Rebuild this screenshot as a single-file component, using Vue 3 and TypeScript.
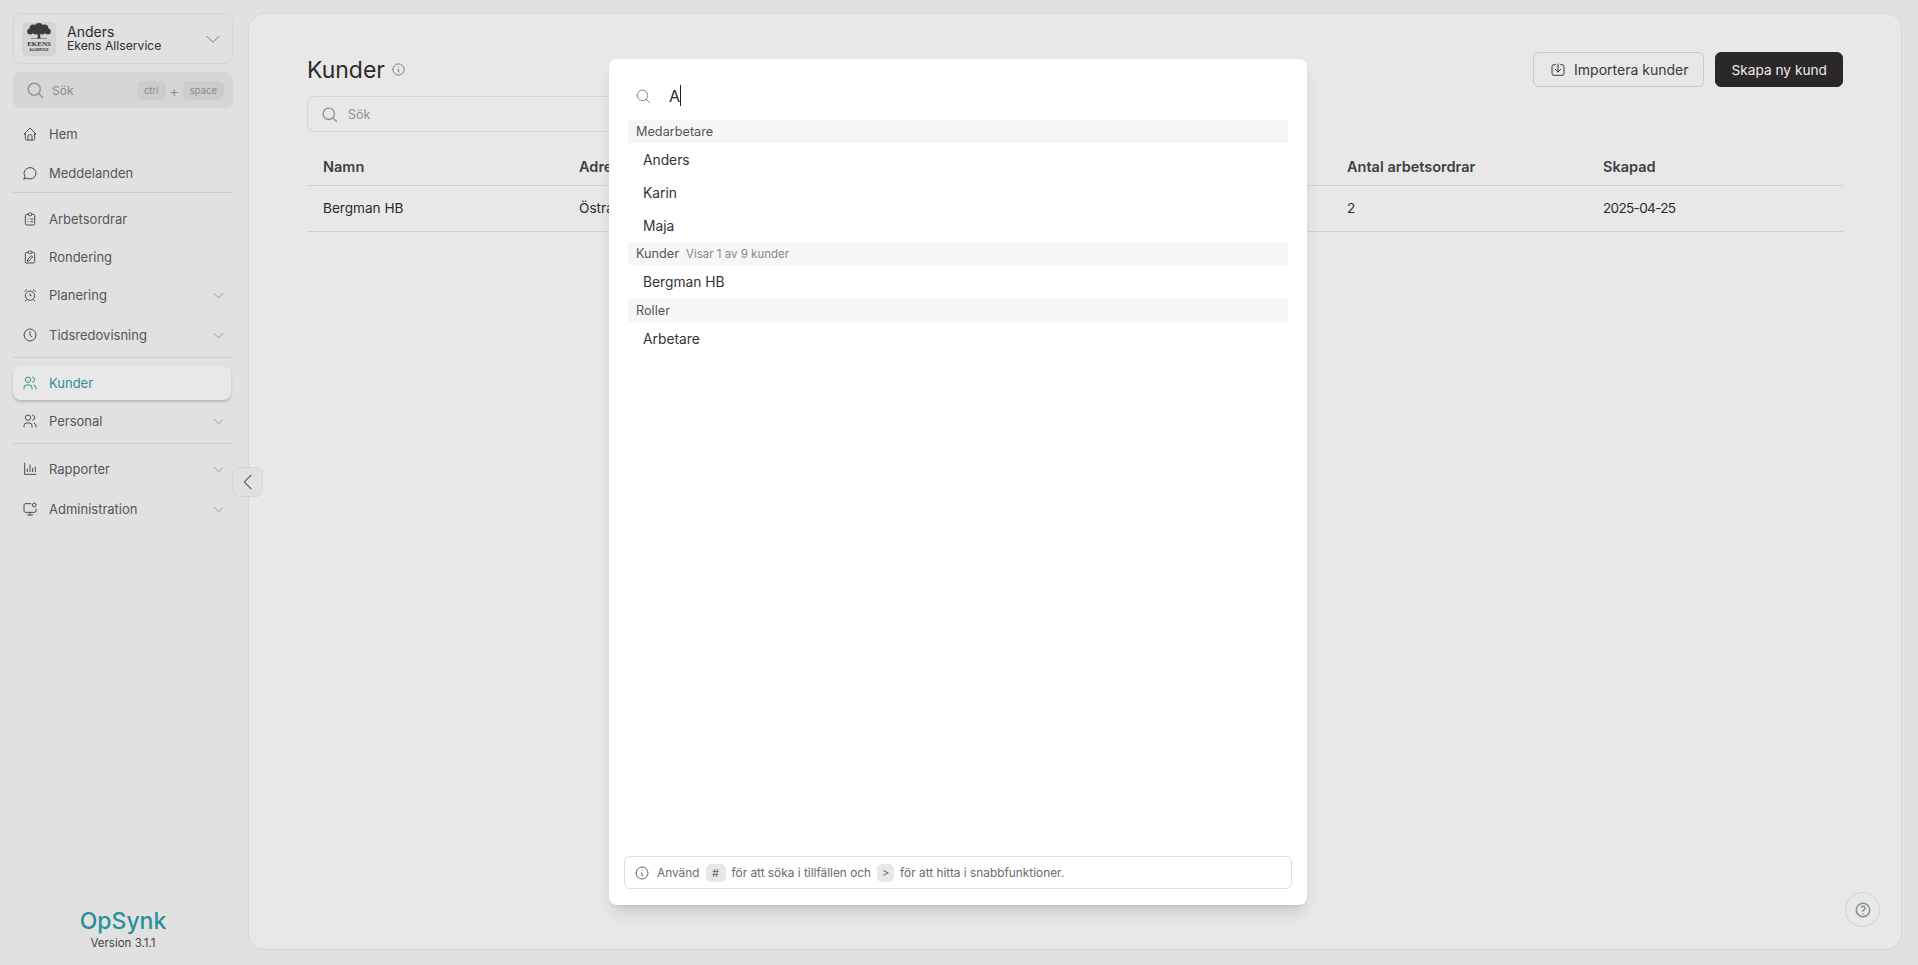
<script setup lang="ts">
interface NavItem { label: string; icon: string[]; chevron?: boolean; active?: boolean }
const I = {
  home: ['M5 12H3l9-9 9 9h-2', 'M5 12v7a2 2 0 0 0 2 2h10a2 2 0 0 0 2-2v-7', 'M9 21v-6a2 2 0 0 1 2-2h2a2 2 0 0 1 2 2v6'],
  msg: ['M3 21l1.4-4.200A9 8.500 0 1 1 7.700 19.800L3 21'],
  list: ['M9 5H7a2 2 0 0 0-2 2v12a2 2 0 0 0 2 2h10a2 2 0 0 0 2-2V7a2 2 0 0 0-2-2h-2', 'M9 5a2 2 0 0 1 2-2h2a2 2 0 0 1 2 2a2 2 0 0 1-2 2h-2a2 2 0 0 1-2-2', 'M9 12h.01M13 12h3M9 16h.01M13 16h3'],
  pen: ['M9 5H7a2 2 0 0 0-2 2v12a2 2 0 0 0 2 2h10a2 2 0 0 0 2-2V7a2 2 0 0 0-2-2h-2', 'M9 5a2 2 0 0 1 2-2h2a2 2 0 0 1 2 2a2 2 0 0 1-2 2h-2a2 2 0 0 1-2-2', 'M8 18l1-3 5-5 2 2-5 5z'],
  alarm: ['M5 13a7 7 0 1 0 14 0a7 7 0 1 0-14 0', 'M12 10v3h2', 'M7 4L4 6.500', 'M17 4l3 2.500', 'M7 19l-2 2M17 19l2 2'],
  clock: ['M3 12a9 9 0 1 0 18 0a9 9 0 1 0-18 0', 'M12 7v5l3 3'],
  users: ['M5 7a4 4 0 1 0 8 0a4 4 0 1 0-8 0', 'M3 21v-2a4 4 0 0 1 4-4h4a4 4 0 0 1 4 4v2', 'M16 3.130a4 4 0 0 1 0 7.750', 'M21 21v-2a4 4 0 0 0-3-3.850'],
  chart: ['M4 3v17h17', 'M8 16v-4M12 16V6M16 16v-5M20 16V9'],
  admin: ['M13 4H5a2 2 0 0 0-2 2v9a2 2 0 0 0 2 2h14a2 2 0 0 0 2-2v-3', 'M8 21h8M12 17v4', 'M15.500 6a2.800 2.800 0 1 0 5.600 0a2.800 2.800 0 1 0-5.600 0'],
}
const groups: NavItem[][] = [
  [{ label: 'Hem', icon: I.home }, { label: 'Meddelanden', icon: I.msg }],
  [{ label: 'Arbetsordrar', icon: I.list }, { label: 'Rondering', icon: I.pen }, { label: 'Planering', icon: I.alarm, chevron: true }, { label: 'Tidsredovisning', icon: I.clock, chevron: true }],
  [{ label: 'Kunder', icon: I.users, active: true }, { label: 'Personal', icon: I.users, chevron: true }],
  [{ label: 'Rapporter', icon: I.chart, chevron: true }, { label: 'Administration', icon: I.admin, chevron: true }],
]
const sections = [
  { title: 'Medarbetare', note: '', items: ['Anders', 'Karin', 'Maja'] },
  { title: 'Kunder', note: 'Visar 1 av 9 kunder', items: ['Bergman HB'] },
  { title: 'Roller', note: '', items: ['Arbetare'] },
]
const columns = ['Namn', 'Adress', '', '', 'Antal arbetsordrar', 'Skapad']
const row = ['Bergman HB', 'Östra', '', '', '2', '2025-04-25']
const crown = [[13, 4, 4], [7.5, 5.5, 4], [18.5, 5.5, 4], [4.2, 8.5, 3], [21.8, 8.5, 3], [10, 8, 3.5], [16, 8, 3.5]]
</script>

<template>
  <div class="page">
    <aside class="sidebar">
      <div class="user">
        <div class="avatar">
          <svg class="tree" width="26" height="16" viewBox="0 0 26 16">
            <circle v-for="(c, i) in crown" :key="i" :cx="c[0]" :cy="c[1]" :r="c[2]" />
            <path d="M11.500 15.500h3l-.6-5 2-2-1 .2-1.200 1-.5-1.700-1 0-.4 1.700-1.300-1-1-.2 2.200 2z" />
            <path d="M5 15.500h16v.5H5z" />
          </svg>
          <span class="ekens">EKENS</span>
          <span class="allservice">ALLSERVICE</span>
        </div>
        <div class="user-text">
          <div class="user-name">Anders</div>
          <div class="user-company">Ekens Allservice</div>
        </div>
        <svg class="user-chev" width="16" height="16" viewBox="0 0 24 24"><path d="M3 8l9 9 9-9" /></svg>
      </div>
      <div class="side-search">
        <svg class="mag" width="18" height="18" viewBox="0 0 24 24"><path d="M3 11a8 8 0 1 0 16 0a8 8 0 1 0-16 0M17 17l5 5" /></svg>
        <span class="side-search-label">Sök</span>
        <span class="kbd">ctrl</span><span class="plus">+</span><span class="kbd">space</span>
      </div>
      <nav class="nav">
        <template v-for="(group, g) in groups" :key="g">
          <div v-if="g" class="divider" />
          <div class="group" :class="`group-${g}`">
            <div v-for="item in group" :key="item.label" class="nav-item" :class="{ active: item.active }">
              <svg class="nav-icon" width="16" height="16" viewBox="0 0 24 24"><path v-for="d in item.icon" :key="d" :d="d" /></svg>
              <span class="nav-label">{{ item.label }}</span>
              <svg v-if="item.chevron" class="nav-chev" width="11" height="11" viewBox="0 0 24 24"><path d="M3 8l9 9 9-9" /></svg>
            </div>
          </div>
        </template>
      </nav>
      <div class="brand">
        <div class="brand-name">OpSynk</div>
        <div class="brand-version">Version 3.1.1</div>
      </div>
    </aside>

    <main class="main">
      <header class="head">
        <div class="head-left">
          <div class="title-row">
            <h1>Kunder</h1>
            <svg class="info" width="15" height="15" viewBox="0 0 24 24"><path d="M3 12a9 9 0 1 0 18 0a9 9 0 1 0-18 0M12 8h.01M11 12h1v4h1" /></svg>
          </div>
          <div class="search">
            <svg class="mag" width="17" height="17" viewBox="0 0 24 24"><path d="M3 11a8 8 0 1 0 16 0a8 8 0 1 0-16 0M17 17l5 5" /></svg>
            <span>Sök</span>
          </div>
        </div>
        <div class="actions">
          <button class="btn">
            <svg width="16" height="16" viewBox="0 0 24 24"><path d="M8 4H6a3 3 0 0 0-3 3v10a3 3 0 0 0 3 3h12a3 3 0 0 0 3-3V7a3 3 0 0 0-3-3h-2M12 3v12M8 11l4 4 4-4" /></svg>
            Importera kunder
          </button>
          <button class="btn primary">Skapa ny kund</button>
        </div>
      </header>
      <div class="table">
        <div class="tr th"><div v-for="(c, i) in columns" :key="i">{{ c }}</div></div>
        <div class="tr td"><div v-for="(c, i) in row" :key="i">{{ c }}</div></div>
      </div>
    </main>

    <button class="collapse" aria-label="Fäll ihop">
      <svg width="18" height="18" viewBox="0 0 24 24"><path d="M16 3l-9 9 9 9" /></svg>
    </button>
    <button class="help" aria-label="Hjälp">
      <svg width="18" height="18" viewBox="0 0 24 24"><path d="M3 12a9 9 0 1 0 18 0a9 9 0 1 0-18 0M12 17h.01M12 13.500a1.500 1.500 0 0 1 1-1.500 2.600 2.600 0 1 0-3-4" /></svg>
    </button>

    <section class="modal">
      <div class="modal-search">
        <svg width="16" height="16" viewBox="0 0 24 24"><path d="M3 11a8 8 0 1 0 16 0a8 8 0 1 0-16 0M17 17l5 5" /></svg>
        <span class="typed">A</span><span class="caret" />
      </div>
      <div class="results">
        <template v-for="s in sections" :key="s.title">
          <div class="sec-head"><span>{{ s.title }}</span><small v-if="s.note">{{ s.note }}</small></div>
          <div v-for="it in s.items" :key="it" class="result">{{ it }}</div>
        </template>
      </div>
      <div class="hint">
        <svg width="16" height="16" viewBox="0 0 24 24"><path d="M3 12a9 9 0 1 0 18 0a9 9 0 1 0-18 0M12 8h.01M11 12h1v4h1" /></svg>
        <span>Använd</span><kbd>#</kbd><span>för att söka i tillfällen och</span><kbd class="narrow">&gt;</kbd><span>för att hitta i snabbfunktioner.</span>
      </div>
    </section>
  </div>
</template>

<style>
html, body { margin: 0; background: #e1e1e1; }
</style>

<style scoped>
* { box-sizing: border-box; }
svg { fill: none; stroke: currentColor; stroke-width: 1.5; stroke-linecap: round; stroke-linejoin: round; flex: none; }
.page { position: relative; display: flex; height: 965px; overflow: hidden; background: #e1e1e1; padding: 13px 16px 15px 0; font-family: "Inter", "Liberation Sans", sans-serif; color: #2b2b2b; }

.sidebar { width: 248px; flex: none; padding: 0 15px 0 13px; display: flex; flex-direction: column; }
.user { height: 51px; border: 1px solid #d6d6d6; border-radius: 8px; display: flex; align-items: center; padding: 0 11px 0 8px; }
.avatar { width: 34px; height: 34px; border-radius: 5px; background: #d4d4d4; display: flex; flex-direction: column; align-items: center; color: #333; padding-top: 1px; overflow: hidden; flex: none; }
.avatar svg.tree { fill: #3c3c3c; stroke: none; }
.ekens { font-family: "Liberation Serif", serif; font-size: 7px; font-weight: 700; line-height: 8px; margin-top: 1px; }
.allservice { font-family: "Liberation Sans", sans-serif; font-size: 3px; line-height: 4px; font-weight: 700; }
.user-text { margin-left: 11px; flex: 1; }
.user-name { font-size: 14px; line-height: 15px; color: #2b2b2b; }
.user-company { font-size: 12.200px; line-height: 14px; color: #2f2f2f; }
.user-chev { color: #777; }
.side-search { height: 36px; margin-top: 8px; background: #d6d6d6; border-radius: 7px; display: flex; align-items: center; padding: 0 9px 0 13px; font-size: 12px; color: #8a8a8a; }
.side-search .mag { color: #8b9898; stroke-width: 2; }
.side-search-label { margin-left: 8px; flex: 1; }
.kbd { height: 19px; line-height: 19px; padding: 0 7px; border-radius: 6px; background: #cbcccc; font-size: 9.500px; color: #8d8d8d; }
.plus { margin: 0 4px; color: #8d8d8d; font-size: 14px; }

.nav { display: flex; flex-direction: column; margin-top: 6px; }
.group { display: flex; flex-direction: column; }
.divider { height: 1px; background: #cdcdcd; }
.nav-item { height: 39px; display: flex; align-items: center; font-size: 13px; color: #555; padding: 0 9px 0 9px; }
.nav-icon { color: #4d4d4d; }
.nav-label { margin-left: 11px; flex: 1; }
.nav-chev { color: #777; }
.group-1 { padding-top: 7px; padding-bottom: 1px; }
.group-1 .nav-item { height: 38px; }
.group-1 .nav-item:last-child { height: 42px; }
.group-2 { padding-top: 8px; padding-bottom: 1px; }
.group-2 .nav-item { height: 42px; }
.group-2 .nav-item.active { height: 34px; margin-right: 2px; border-radius: 8px; background: #e8e8e8; color: #2a9098; box-shadow: 0 2px 3px rgba(0, 0, 0, .18); }
.group-2 .nav-item.active .nav-icon { color: #2a9098; }
.group-3 { padding-top: 5px; }
.group-3 .nav-item { height: 40px; }

.brand { margin-top: auto; margin-bottom: -1px; text-align: center; }
.brand-name { font-size: 23px; font-weight: 500; line-height: 28px; color: #2a9098; }
.brand-version { font-size: 11.500px; line-height: 16px; color: #444; }

.main { flex: 1; min-width: 0; background: #e8e8e8; border: 1px solid #d8d8d8; border-radius: 16px; padding: 38px 58px 0 58px; }
.head { display: flex; justify-content: space-between; align-items: flex-start; }
.title-row { display: flex; align-items: center; height: 36px; }
h1 { margin: 0; font-size: 23px; font-weight: 400; color: #2b2b2b; }
.info { margin-left: 6px; color: #777; margin-bottom: 2px; }
.search { margin-top: 8px; width: 400px; height: 36px; border: 1px solid #d5d5d5; border-radius: 7px; display: flex; align-items: center; padding: 0 13px; gap: 10px; font-size: 12.500px; color: #909090; }
.search .mag { color: #8b9898; stroke-width: 2; }
.actions { display: flex; gap: 11px; }
.btn { height: 35px; padding: 0 15px 0 16px; display: inline-flex; align-items: center; gap: 8px; border: 1px solid #c9c9c9; border-radius: 6px; background: transparent; font-family: inherit; font-size: 14px; color: #3a3a3a; }
.btn.primary { padding: 0 15px; font-size: 13.700px; background: #2a2829; border-color: #2a2829; color: #f0ece4; }

.table { margin-top: 15px; }
.tr { display: grid; grid-template-columns: repeat(6, 1fr); border-bottom: 1px solid #d2d2d2; }
.tr > div { padding-left: 16px; }
.th { height: 39px; align-items: center; font-size: 14.500px; font-weight: 600; color: #3f3f3f; }
.td { height: 46px; padding-bottom: 1px; align-items: center; font-size: 13.600px; color: #2b2b2b; }
.td > div:last-child { letter-spacing: -.7px; }

.collapse { position: absolute; left: 232px; top: 467px; width: 31px; height: 30px; padding: 0; border: 1px solid #d6d6d6; border-radius: 7px; background: #e1e1e1; display: flex; align-items: center; justify-content: center; color: #666; }
.help { position: absolute; left: 1845px; top: 892px; width: 35px; height: 35px; padding: 0; border: 1px solid #d2d2d2; border-radius: 50%; background: transparent; display: flex; align-items: center; justify-content: center; color: #83908f; }
.help svg { stroke-width: 2; }

.modal { position: absolute; left: 609px; top: 59px; width: 698px; height: 846px; background: #fff; border-radius: 8px; box-shadow: 0 10px 15px -3px rgba(0, 0, 0, .12), 0 4px 6px -4px rgba(0, 0, 0, .12); display: flex; flex-direction: column; padding: 0 15px 16px; }
.modal-search { height: 61px; display: flex; align-items: center; padding: 12px 0 0 11px; color: #888; }
.typed { margin-left: 18px; font-size: 16px; color: #2b2b2b; }
.caret { width: 1px; height: 21px; background: #222; }
.results { flex: 1; margin: 0 4px; }
.sec-head { height: 23px; background: #f6f6f6; display: flex; align-items: center; padding-left: 8px; font-size: 12.700px; color: #555; gap: 7px; }
.sec-head small { font-size: 11.500px; color: #888; }
.result { height: 33px; display: flex; align-items: center; padding-left: 15px; font-size: 13.800px; color: #333; }
.result:nth-child(6) { height: 34px; }
.hint { height: 33px; border: 1px solid #dcdcdc; border-radius: 6px; display: flex; align-items: center; padding-left: 9px; font-size: 11.850px; color: #6b6b6b; }
.hint svg { color: #666; margin-right: 7px; }
kbd { font-family: inherit; font-size: 11px; background: #e8e8e8; border-radius: 5px; height: 18px; width: 20px; margin: 0 6px; display: flex; align-items: center; justify-content: center; color: #666; }
kbd.narrow { width: 17px; }
</style>
